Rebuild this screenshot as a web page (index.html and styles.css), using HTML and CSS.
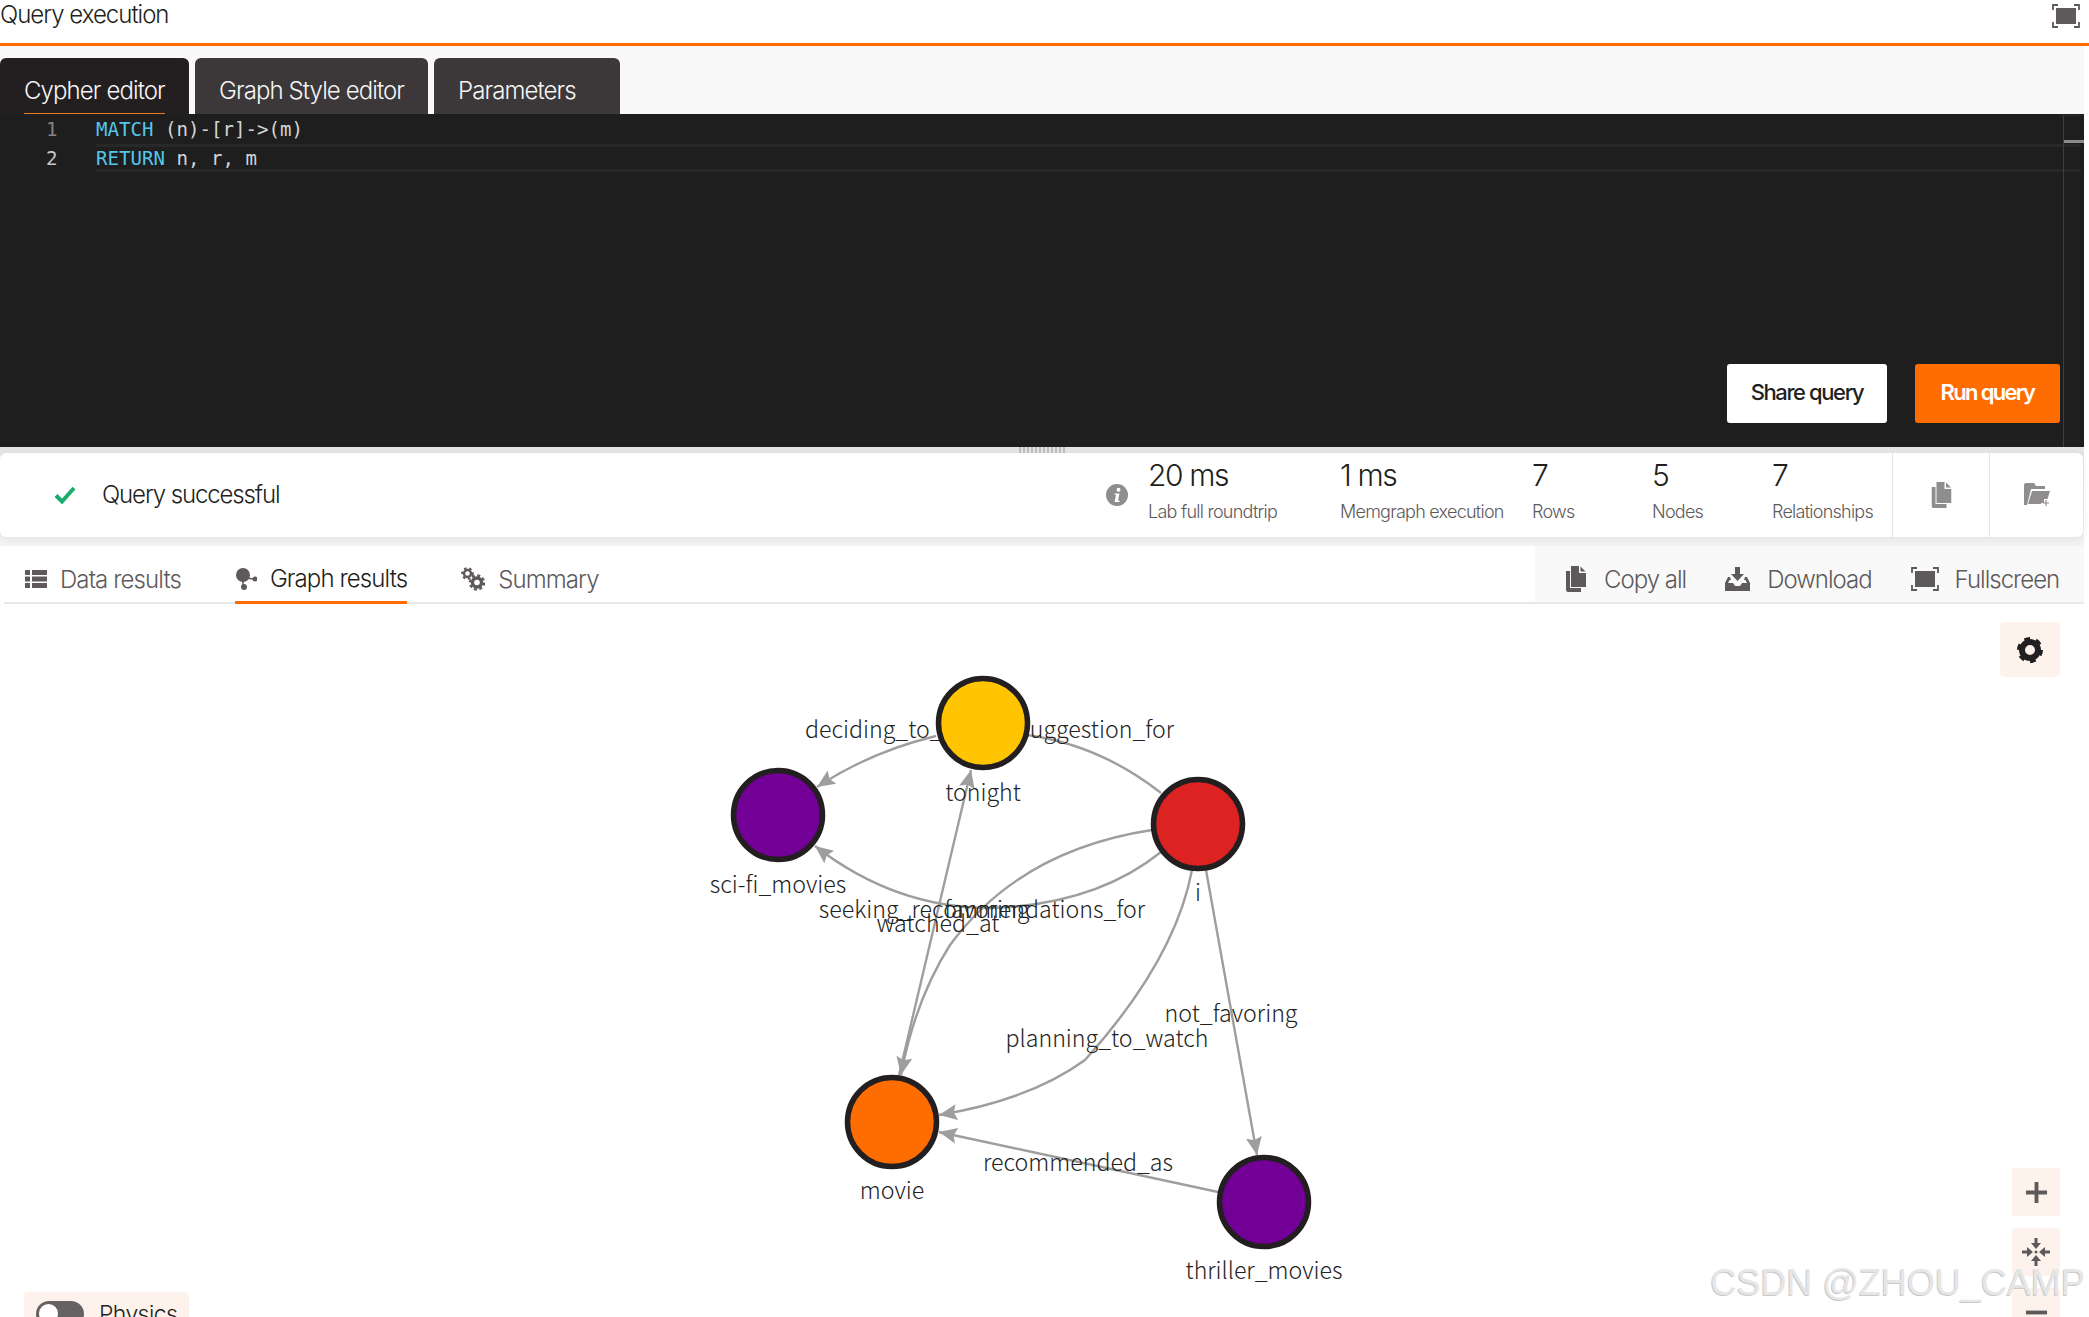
FILE: index.html
```html
<!DOCTYPE html>
<html lang="en">
<head>
<meta charset="utf-8">
<title>Query execution</title>
<link rel="stylesheet" href="styles.css">
</head>
<body>
<svg class="defs" width="0" height="0" aria-hidden="true">
  <defs>
    <symbol id="i-copy" viewBox="0 0 20 26">
      <path d="M0 5h4v17h11v4H2a2 2 0 0 1-2-2z"/>
      <path d="M5 0h8v7h7v14H5z"/>
      <path d="M14.500 0.500l5 5h-5z"/>
    </symbol>
    <symbol id="i-full" viewBox="0 0 28 24">
      <rect x="4" y="4" width="20" height="16"/>
      <path fill="none" stroke="currentColor" stroke-width="1.800" d="M1 6V1h5M22 1h5v5M27 18v5h-5M6 23H1v-5"/>
    </symbol>
  </defs>
</svg>

<header class="topbar">
  <h1 class="topbar-title">Query execution</h1>
  <svg class="topbar-icon" viewBox="0 0 28 24"><use href="#i-full"/></svg>
</header>

<div class="page">
  <nav class="editor-tabs">
    <div class="editor-tab editor-tab-active"><span class="editor-tab-label">Cypher editor</span></div>
    <div class="editor-tab editor-tab-style"><span class="editor-tab-label">Graph Style editor</span></div>
    <div class="editor-tab editor-tab-params"><span class="editor-tab-label">Parameters</span></div>
  </nav>

  <section class="editor">
    <div class="code-line">
      <span class="line-no">1</span>
      <code class="code"><span class="kw">MATCH</span> (n)-[r]-&gt;(m)</code>
    </div>
    <div class="code-line code-line-current">
      <span class="line-no line-no-current">2</span>
      <code class="code"><span class="kw">RETURN</span> n, r, m</code>
    </div>
    <div class="minimap"><div class="minimap-mark"></div></div>
    <div class="editor-actions">
      <button class="btn btn-share">Share query</button>
      <button class="btn btn-run">Run query</button>
    </div>
  </section>

  <section class="status-band">
    <div class="splitter"><div class="grip"></div></div>
    <div class="status-card">
      <div class="status-ok">
        <svg class="check" viewBox="0 0 22 18"><path d="M2 9.500l6 6L20 2" fill="none" stroke="#1dab6b" stroke-width="4"/></svg>
        <span class="status-text">Query successful</span>
      </div>
      <svg class="info" viewBox="0 0 22 22">
        <circle cx="11" cy="11" r="11" fill="#8f8d8e"/>
        <circle cx="12.500" cy="5.800" r="2" fill="#fff"/>
        <path d="M9 9.500h4.500l-1.500 7h1.500v1.500H8.500l1.500-7H8.500z" fill="#fff"/>
      </svg>
      <div class="stats">
        <div class="stat"><div class="stat-value">20 ms</div><div class="stat-label">Lab full roundtrip</div></div>
        <div class="stat"><div class="stat-value">1 ms</div><div class="stat-label">Memgraph execution</div></div>
        <div class="stat"><div class="stat-value">7</div><div class="stat-label">Rows</div></div>
        <div class="stat"><div class="stat-value">5</div><div class="stat-label">Nodes</div></div>
        <div class="stat"><div class="stat-value">7</div><div class="stat-label">Relationships</div></div>
      </div>
      <div class="status-action status-action-copy">
        <svg class="status-icon-copy" viewBox="0 0 20 26"><use href="#i-copy"/></svg>
      </div>
      <div class="status-action status-action-folder">
        <svg class="status-icon-folder" viewBox="0 0 26 24">
          <path d="M2 0h8l2 3h9v3H7L3 22H0V2a2 2 0 0 1 2-2z"/>
          <path d="M8 8h18l-2.500 8H20v4h-3v1H4z"/>
          <path d="M22 17v6M19 20h6" fill="none" stroke="currentColor" stroke-width="1.200"/>
        </svg>
      </div>
    </div>
  </section>

  <nav class="result-tabs">
    <div class="result-tab">
      <svg class="tab-icon tab-icon-list" viewBox="0 0 22 18">
        <path d="M0 0h5v5H0zM7 0h15v5H7zM0 6.500h5v5H0zM7 6.500h15v5H7zM0 13h5v5H0zM7 13h15v5H7z"/>
      </svg>
      <span>Data results</span>
    </div>
    <div class="result-tab result-tab-active">
      <svg class="tab-icon tab-icon-graph" viewBox="0 0 22 22">
        <circle cx="8" cy="7" r="7"/><circle cx="9" cy="19" r="3"/><circle cx="20" cy="11" r="2.500"/>
        <path d="M8 10v8M10 10l9 1" fill="none" stroke="currentColor" stroke-width="1.500"/>
      </svg>
      <span>Graph results</span>
    </div>
    <div class="result-tab">
      <svg class="tab-icon tab-icon-gears" viewBox="0 0 24 24">
        <g fill="none" stroke="currentColor">
          <circle cx="6.500" cy="6.500" r="3.500" stroke-width="2.400"/>
          <circle cx="6.500" cy="6.500" r="5.300" stroke-width="2" stroke-dasharray="2.600 2.600"/>
          <circle cx="16" cy="15.500" r="4.500" stroke-width="3.400"/>
          <circle cx="16" cy="15.500" r="7" stroke-width="2.400" stroke-dasharray="3 2.500"/>
        </g>
      </svg>
      <span>Summary</span>
    </div>
    <div class="result-actions">
      <div class="result-action result-action-copy">
        <svg class="action-icon-copy" viewBox="0 0 20 26"><use href="#i-copy"/></svg>
        <span>Copy all</span>
      </div>
      <div class="result-action result-action-download">
        <svg class="action-icon-download" viewBox="0 0 25 24">
          <path d="M10 0h5v7h4l-6.500 7L6 7h4z"/>
          <path d="M0 24v-8l3-6h2l1 3H4.500L3 16h5l2 3h5l2-3h5l-1.500-3H19l1-3h2l3 6v8z"/>
        </svg>
        <span>Download</span>
      </div>
      <div class="result-action result-action-full">
        <svg class="action-icon-full" viewBox="0 0 28 24"><use href="#i-full"/></svg>
        <span>Fullscreen</span>
      </div>
    </div>
  </nav>

  <main class="graph">
    <svg class="graph-canvas" viewBox="0 604 2084 713">
      <defs>
        <marker id="arrow" markerUnits="userSpaceOnUse" markerWidth="20" markerHeight="18" refX="18" refY="8" orient="auto">
          <path d="M0 0L18 8L0 16L3 8z" fill="#9e9e9e"/>
        </marker>
      </defs>
      <g class="edges">
        <path d="M936 736Q870 752 817 787" marker-end="url(#arrow)"/>
        <path d="M1161 793Q1100 745 1027 735"/>
        <path d="M1161 852Q1095 905 990 908Q895 908 815 846" marker-end="url(#arrow)"/>
        <path d="M1152 830Q1020 850 950 945Q915 1000 901 1075" marker-end="url(#arrow)"/>
        <path d="M899 1075L971 770" marker-end="url(#arrow)"/>
        <path d="M1192 870Q1175 960 1085 1060Q1030 1100 939 1115" marker-end="url(#arrow)"/>
        <path d="M1206 870L1257 1155" marker-end="url(#arrow)"/>
        <path d="M1218 1192L939 1132" marker-end="url(#arrow)"/>
      </g>
      <g class="graph-labels">
        <text x="805" y="738">deciding_to_watch</text>
        <text x="1174" y="738" class="anchor-end">suggestion_for</text>
        <text x="982" y="918" class="anchor-mid">seeking_recommendations_for</text>
        <text x="987" y="918" class="anchor-mid">favoring</text>
        <text x="938" y="932" class="anchor-mid">watched_at</text>
        <text x="1231" y="1022" class="anchor-mid">not_favoring</text>
        <text x="1107" y="1047" class="anchor-mid">planning_to_watch</text>
        <text x="1078" y="1171" class="anchor-mid">recommended_as</text>
      </g>
      <g class="nodes">
        <circle cx="983" cy="723" r="44.500" fill="#ffc500"/>
        <circle cx="778" cy="815" r="44.500" fill="#720096"/>
        <circle cx="1198" cy="824" r="44.500" fill="#dd2222"/>
        <circle cx="892" cy="1122" r="44.500" fill="#ff6d00"/>
        <circle cx="1264" cy="1202" r="44.500" fill="#720096"/>
      </g>
      <g class="graph-labels">
        <text x="983" y="801" class="anchor-mid">tonight</text>
        <text x="778" y="893" class="anchor-mid">sci-fi_movies</text>
        <text x="1198" y="901" class="anchor-mid">i</text>
        <text x="892" y="1199" class="anchor-mid">movie</text>
        <text x="1264" y="1279" class="anchor-mid">thriller_movies</text>
      </g>
    </svg>

    <button class="ctl ctl-settings" aria-label="Settings">
      <svg class="settings-icon" viewBox="0 0 26 26">
        <circle cx="13" cy="13" r="8" fill="none" stroke="#231f20" stroke-width="6"/>
        <circle cx="13" cy="13" r="11.200" fill="none" stroke="#231f20" stroke-width="3.600" stroke-dasharray="5.700 6"/>
      </svg>
    </button>

    <div class="zoom-controls">
      <button class="ctl ctl-zoom" aria-label="Zoom in">
        <svg class="zoom-icon" viewBox="0 0 24 24"><path d="M12 1v22M1 12h22" fill="none" stroke="#5e5a5b" stroke-width="4"/></svg>
      </button>
      <button class="ctl ctl-zoom" aria-label="Fit">
        <svg class="fit-icon" viewBox="0 0 28 28">
          <g fill="#5e5a5b">
            <path d="M12.500 0h3v5H19l-5 6-5-6h3.500z"/>
            <path d="M12.500 28h3v-5H19l-5-6-5 6h3.500z"/>
            <path d="M0 12.500v3h5V19l6-5-6-5v3.500z"/>
            <path d="M28 12.500v3h-5V19l-6-5 6-5v3.500z"/>
            <circle cx="14" cy="14" r="1.500"/>
          </g>
        </svg>
      </button>
      <button class="ctl ctl-zoom" aria-label="Zoom out">
        <svg class="zoom-icon" viewBox="0 0 24 24"><path d="M1 12h22" fill="none" stroke="#5e5a5b" stroke-width="4"/></svg>
      </button>
    </div>

    <div class="physics">
      <span class="toggle"><span class="toggle-knob"></span></span>
      <span class="physics-label">Physics</span>
    </div>

    <div class="watermark">CSDN @ZHOU_CAMP</div>
  </main>
</div>
</body>
</html>
```

FILE: styles.css
```css
* { box-sizing: border-box; }

html, body {
  margin: 0;
  height: 1317px;
  overflow: hidden;
  background: #fff;
  font-family: Inter, "Liberation Sans", sans-serif;
  color: #231f20;
}

.defs { position: absolute; }

button { font: inherit; border: 0; cursor: pointer; }

/* top bar */
.topbar {
  height: 46px;
  border-bottom: 3px solid #ff6d00;
  display: flex;
  align-items: flex-start;
  justify-content: space-between;
  padding-right: 9px;
}
.topbar-title {
  margin: 0;
  font-size: 24px;
  font-weight: 350;
  line-height: 30px;
  letter-spacing: -1px;
}
.topbar-icon { width: 28px; height: 24px; margin-top: 4px; color: #5e5a5b; fill: #5e5a5b; }

.page { width: 2084px; }

/* editor tabs */
.editor-tabs {
  height: 68px;
  padding-top: 12px;
  background: #f9f9f9;
  display: flex;
  gap: 6px;
}
.editor-tab {
  background: #3c3839;
  color: #f5f5f5;
  border-radius: 6px 6px 0 0;
  padding: 0 24px;
  font-size: 24px;
  font-weight: 350;
  letter-spacing: -0.9px;
  display: flex;
  align-items: flex-end;
}
.editor-tab-active { background: #231f20; width: 189px; }
.editor-tab-style { width: 233px; }
.editor-tab-params { width: 186px; }
.editor-tab-label {
  display: block;
  height: 56px;
  line-height: 66px;
  white-space: nowrap;
  border-bottom: 1px solid transparent;
}
.editor-tab-active .editor-tab-label { border-bottom-color: #e8791e; }

/* code editor */
.editor {
  position: relative;
  height: 333px;
  background: #1e1e1e;
  padding-top: 2px;
}
.code-line {
  height: 28px;
  display: flex;
  align-items: center;
  padding-bottom: 2px;
  font-family: "DejaVu Sans Mono", monospace;
  font-size: 19.100px;
  color: #d4d4d4;
}
.code-line-current { position: relative; padding-bottom: 0; }
.code-line-current::after {
  content: "";
  position: absolute;
  left: 96px;
  right: 3px;
  top: 0;
  bottom: 0;
  border-top: 3px solid #282828;
  border-bottom: 3px solid #282828;
}
.line-no { width: 96px; padding-left: 46px; color: #858585; }
.line-no-current { color: #c6c6c6; }
.code { font: inherit; white-space: pre; }
.kw { color: #56c5ea; }
.minimap {
  position: absolute;
  top: 1px;
  right: 0;
  bottom: 0;
  width: 21px;
  border-left: 1px solid #3e3e3e;
  border-top: 1px solid #2a2a2a;
}
.minimap-mark { margin-top: 24px; height: 3px; background: #8c8c8c; }
.editor-actions {
  position: absolute;
  right: 24px;
  top: 250px;
  display: flex;
  gap: 28px;
}
.btn {
  height: 59px;
  border-radius: 3px;
  font-size: 22px;
  font-weight: 500;
  letter-spacing: -1.4px;
  padding: 0 0 3px;
}
.btn-share { width: 160px; background: #fff; color: #231f20; }
.btn-run { width: 145px; background: #ff6d00; color: #fff; font-weight: 600; letter-spacing: -1.7px; }

/* status */
.status-band {
  height: 99px;
  background: linear-gradient(#e4e4e4, #e4e4e4 20%, #f4f4f4);
}
.splitter { height: 6px; display: flex; justify-content: center; }
.grip {
  width: 46px;
  height: 6px;
  background: repeating-linear-gradient(90deg, #bdbdbd 0 2px, transparent 2px 4px);
}
.status-card {
  height: 84px;
  width: 2083px;
  background: #fff;
  border-radius: 6px;
  box-shadow: 0 3px 8px rgba(0, 0, 0, 0.06);
  display: flex;
  align-items: center;
}
.status-ok {
  flex: 0 0 1106px;
  display: flex;
  align-items: center;
  padding-left: 54px;
  gap: 26px;
}
.check { width: 22px; height: 18px; }
.status-text { font-size: 24px; font-weight: 350; letter-spacing: -1.12px; margin-top: -1px; }
.info { width: 22px; height: 22px; flex: none; }
.stats {
  margin-left: 20px;
  padding-bottom: 6px;
  display: grid;
  grid-template-columns: 192px 192px 120px 120px 120px;
}
.stat-value { font-size: 30px; font-weight: 350; line-height: 40px; letter-spacing: -1.4px; }
.stat-label { font-size: 18px; font-weight: 350; color: #5e5a5b; line-height: 34px; letter-spacing: -0.75px; white-space: nowrap; }
.status-action {
  height: 100%;
  border-left: 1px solid #e6e6e6;
  display: flex;
  align-items: center;
  justify-content: center;
  color: #8f8d8e;
  fill: #8f8d8e;
}
.status-action-copy { width: 97px; }
.status-action-folder { width: 94px; }
.status-icon-copy { width: 21px; height: 26px; }
.status-icon-folder { width: 26px; height: 24px; }

/* result tabs */
.result-tabs {
  position: relative;
  height: 58px;
  margin-left: 4px;
  border-bottom: 2px solid #e8e8e8;
  display: flex;
  padding-left: 21px;
  gap: 54px;
}
.result-tab {
  display: flex;
  align-items: center;
  gap: 13px;
  height: 56px;
  padding-top: 10px;
  font-size: 24px;
  font-weight: 350;
  letter-spacing: -0.9px;
  color: #5e5a5b;
  fill: #5e5a5b;
}
.result-tab-active {
  color: #231f20;
  border-bottom: 3px solid #ff6d00;
  height: 58px;
}
.tab-icon { flex: none; fill: #5e5a5b; color: #5e5a5b; }
.tab-icon-list { width: 22px; height: 18px; }
.tab-icon-graph { width: 22px; height: 22px; }
.tab-icon-gears { width: 24px; height: 24px; }
.result-actions {
  margin-left: auto;
  width: 549px;
  height: 56px;
  background: #f9f9f9;
  display: flex;
  align-items: center;
  padding: 10px 0 0 31px;
  gap: 39px;
  color: #5e5a5b;
  fill: #5e5a5b;
  font-size: 24px;
  font-weight: 350;
  letter-spacing: -1px;
}
.result-action { display: flex; align-items: center; gap: 18px; }
.result-action-download { gap: 17px; }
.result-action-full { gap: 16px; }
.action-icon-copy { width: 20px; height: 26px; }
.action-icon-download { width: 25px; height: 24px; }
.action-icon-full { width: 28px; height: 24px; color: #5e5a5b; }

/* graph */
.graph { position: relative; height: 713px; }
.graph-canvas { display: block; width: 2084px; height: 713px; }
.edges path { fill: none; stroke: #9e9e9e; stroke-width: 2.400; }
.graph-labels text {
  font-family: "Noto Sans CJK SC", "Noto Sans", sans-serif;
  font-size: 23.200px;
  font-weight: 300;
  fill: #222;
}
.graph-labels .anchor-mid { text-anchor: middle; }
.graph-labels .anchor-end { text-anchor: end; }
.nodes circle { stroke: #231f20; stroke-width: 5.500px; }

.ctl {
  background: #fdf3ec;
  border-radius: 4px;
  padding: 0;
  display: flex;
  align-items: center;
  justify-content: center;
}
.ctl-settings {
  position: absolute;
  left: 2000px;
  top: 18px;
  width: 60px;
  height: 55px;
}
.settings-icon { width: 26px; height: 26px; }
.zoom-controls {
  position: absolute;
  left: 2012px;
  top: 564px;
  display: flex;
  flex-direction: column;
  gap: 12px;
}
.ctl-zoom { width: 48px; height: 48px; }
.zoom-icon { width: 23px; height: 23px; }
.fit-icon { width: 28px; height: 28px; }

.physics {
  position: absolute;
  left: 24px;
  top: 688px;
  width: 165px;
  height: 40px;
  background: #fdf3ec;
  border-radius: 4px;
  display: flex;
  align-items: flex-start;
  padding: 9px 0 0 12px;
  gap: 15px;
}
.toggle {
  width: 48px;
  height: 26px;
  border-radius: 13px;
  background: #666264;
  padding: 3px;
  display: block;
}
.toggle-knob { display: block; width: 19px; height: 19px; border-radius: 50%; background: #fff; }
.physics-label { font-size: 23px; font-weight: 350; line-height: 26px; letter-spacing: -0.6px; }

.watermark {
  position: absolute;
  right: -1px;
  top: 657px;
  font-family: "Liberation Sans", sans-serif;
  font-size: 36px;
  line-height: 44px;
  white-space: nowrap;
  color: #e6e6e6;
  text-shadow: -1px 1px 0 #c9c9c9;
  pointer-events: none;
}
```
